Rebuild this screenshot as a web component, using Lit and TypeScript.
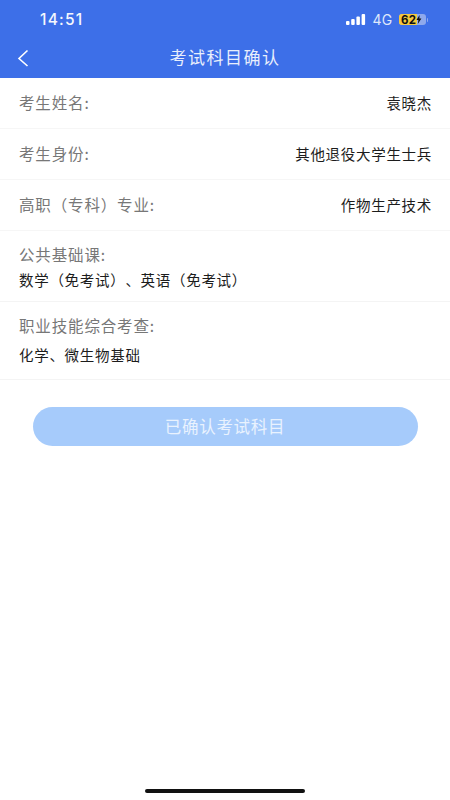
import { LitElement, html, css } from "lit";
import { customElement } from "lit/decorators.js";

@customElement("app-root")
export class AppRoot extends LitElement {
  static styles = css`
    :host { display: block; width: 450px; height: 800px; background: #fff; font-family: "Noto Sans CJK SC", "Noto Sans", sans-serif; text-spacing-trim: space-all; position: relative; overflow: hidden; }
    .header { background: #3d6fe8; height: 78px; color: #fff; display: flex; flex-direction: column; box-sizing: border-box; }
    .status { height: 40px; display: flex; align-items: center; padding: 1px 22px 0 40px; box-sizing: border-box; justify-content: space-between; }
    .time { font: 500 15.5px "Inter", sans-serif; letter-spacing: 1.2px; opacity: .95; }
    .status-right { display: flex; align-items: center; gap: 6px; }
    .net { font: 400 14px "Inter", sans-serif; color: #dfe8fb; letter-spacing: .3px; }
    .batt { display: flex; align-items: center; }
    .batt-body { width: 27px; height: 11px; border-radius: 3px; background: #8fa9ec; position: relative; overflow: hidden; display: flex; align-items: center; }
    .batt-fill { position: absolute; left: 0; top: 0; bottom: 0; width: 18px; background: #f5c93e; }
    .batt-num { position: relative; font: 700 11.5px "Inter", sans-serif; color: #111; margin-left: 2.5px; letter-spacing: .2px; }
    .batt-tip { width: 1.5px; height: 4px; background: #8fa9ec; margin-left: 1px; border-radius: 0 1px 1px 0; }
    .bolt { position: relative; display: block; }
    .nav { flex: 1; display: flex; align-items: center; justify-content: center; position: relative; }
    .back { position: absolute; left: 16px; top: 11px; display: block; }
    .title { font-size: 17px; letter-spacing: 1.5px; color: #e8eefc; line-height: 38px; padding-bottom: 2px; }
    .row { height: 51px; box-sizing: border-box; border-bottom: 1px solid #f6f6f6; display: flex; justify-content: space-between; align-items: center; padding: 0 18px 2px 19px; }
    .row .value { padding-top: 2px; }
    .label { font-size: 15.5px; letter-spacing: .85px; color: #777; line-height: 20px; }
    .value { font-size: 14.5px; letter-spacing: .7px; color: #1c1c1c; line-height: 20px; }
    .stack { box-sizing: border-box; border-bottom: 1px solid #f4f4f4; padding: 0 19px; display: flex; flex-direction: column; justify-content: center; }
    .s1 { height: 71px; gap: 6px; padding-top: 1px; }
    .s2 { height: 78px; gap: 10px; padding-bottom: 2px; }
    .wrap { padding: 27px 32.5px 0; }
    .btn { height: 39px; border-radius: 20px; background: #a6cbfb; color: #e9f2fe; font-size: 16.5px; letter-spacing: .7px; display: flex; align-items: center; justify-content: center; padding-bottom: 2px; box-sizing: border-box; }
    .home { position: absolute; left: 145px; bottom: 7px; width: 160px; height: 4px; border-radius: 2px; background: #111; }
  `;

  render() {
    return html`
      <div class="header">
        <div class="status">
          <span class="time">14:51</span>
          <div class="status-right">
            <svg width="20" height="11" viewBox="0 0 20 11" fill="#fff">
              <rect x="0" y="7" width="3.5" height="4" rx="1"/>
              <rect x="5.2" y="5" width="3.5" height="6" rx="1"/>
              <rect x="10.4" y="2.5" width="3.5" height="8.5" rx="1"/>
              <rect x="15.6" y="0" width="3.5" height="11" rx="1"/>
            </svg>
            <span class="net">4G</span>
            <div class="batt">
              <div class="batt-body">
                <div class="batt-fill"></div>
                <span class="batt-num">62</span>
                <svg class="bolt" width="6" height="9" viewBox="0 0 6 9" fill="#111"><path d="M3.6 0 .4 5h2L1.8 9 5.4 3.6h-2z"/></svg>
              </div>
              <div class="batt-tip"></div>
            </div>
          </div>
        </div>
        <div class="nav">
          <svg class="back" width="14" height="18" viewBox="0 0 14 18" fill="none" stroke="#fff" stroke-width="1.6"><path d="M11.5 1.5 3 9.5l8.5 7.5"/></svg>
          <span class="title">考试科目确认</span>
        </div>
      </div>
      <div class="row"><span class="label">考生姓名:</span><span class="value">袁晓杰</span></div>
      <div class="row"><span class="label">考生身份:</span><span class="value">其他退役大学生士兵</span></div>
      <div class="row"><span class="label">高职（专科）专业:</span><span class="value">作物生产技术</span></div>
      <div class="stack s1"><span class="label">公共基础课:</span><span class="value">数学（免考试）、英语（免考试）</span></div>
      <div class="stack s2"><span class="label">职业技能综合考查:</span><span class="value">化学、微生物基础</span></div>
      <div class="wrap"><div class="btn">已确认考试科目</div></div>
      <div class="home"></div>
    `;
  }
}
